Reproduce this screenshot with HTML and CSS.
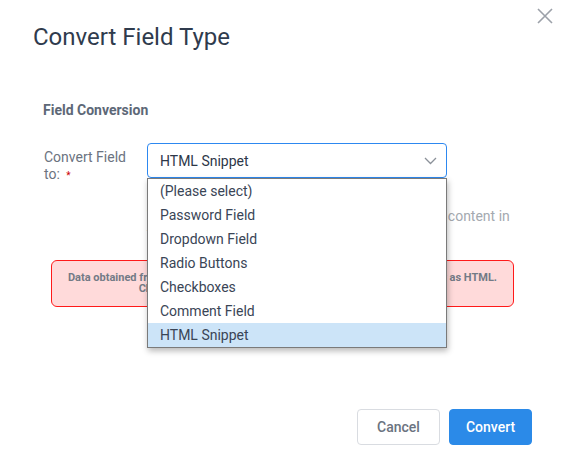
FILE: index.html
```html
<!DOCTYPE html>
<html>
<head>
<meta charset="utf-8">
<link rel="stylesheet" href="styles.css">
</head>
<body>
<div class="modal">
  <button class="close" aria-label="Close">
    <svg width="16" height="16" viewBox="0 0 16 16"><path d="M1 1L15 15M15 1L1 15" stroke="#9ca1a9" stroke-width="1.6" fill="none"/></svg>
  </button>
  <div class="header"><h1 class="title">Convert Field Type</h1></div>
  <div class="body">
    <div class="section-title">Field Conversion</div>
    <div class="form-row">
      <div class="label">Convert Field to: <span class="req">*</span></div>
      <div class="field">
        <div class="select">
          <span>HTML Snippet</span>
          <svg class="chev" width="13" height="8" viewBox="0 0 13 8"><polyline points="1,1 6.5,6.5 12,1" stroke="#8b9199" stroke-width="1.3" fill="none"/></svg>
        </div>
        <div class="help"><span class="help-line">This field lets you show your own custom HTML content in</span><span class="help-line">the form.</span></div>
        <ul class="dropdown">
          <li class="opt">(Please select)</li>
          <li class="opt">Password Field</li>
          <li class="opt">Dropdown Field</li>
          <li class="opt">Radio Buttons</li>
          <li class="opt">Checkboxes</li>
          <li class="opt">Comment Field</li>
          <li class="opt selected">HTML Snippet</li>
        </ul>
      </div>
    </div>
    <div class="alert">Data obtained from this field will be converted and henceforth displayed only as HTML.<br>Changing the field type cannot be undone once it is saved.</div>
  </div>
  <div class="footer">
    <button class="btn btn-cancel">Cancel</button>
    <button class="btn btn-primary">Convert</button>
  </div>
</div>
</body>
</html>
```

FILE: styles.css
```css
html, body {
  margin: 0;
  padding: 0;
  background: #ffffff;
}
body {
  font-family: Roboto, "Liberation Sans", sans-serif;
}
.modal {
  position: relative;
  width: 567px;
  height: 465px;
  box-sizing: border-box;
  display: flex;
  flex-direction: column;
  overflow: hidden;
}
.close {
  position: absolute;
  top: 8px;
  right: 14px;
  padding: 0;
  border: 0;
  background: none;
  width: 16px;
  height: 16px;
}
.close svg { display: block; }
.header {
  padding: 23px 34px 0 33px;
}
.title {
  margin: 0;
  font-size: 24px;
  line-height: 28px;
  font-weight: 400;
  color: #2f3b4d;
}
.body {
  padding: 0 53px 0 43px;
}
.section-title {
  margin-top: 51px;
  font-size: 14px;
  line-height: 17px;
  font-weight: 700;
  color: #5d6877;
}
.form-row {
  display: flex;
  margin-top: 24px;
  padding-left: 1px;
}
.label {
  width: 90px;
  margin-right: 13px;
  padding-top: 6px;
  font-size: 14px;
  line-height: 17px;
  color: #6b7380;
}
.req {
  color: #cc0000;
  font-size: 10px;
  margin-left: 3px;
}
.field {
  position: relative;
  width: 300px;
}
.select {
  height: 35px;
  box-sizing: border-box;
  border: 1px solid #2d88f0;
  border-radius: 4px;
  padding: 0 9px 0 12px;
  display: flex;
  align-items: center;
  justify-content: space-between;
  font-size: 14px;
  color: #2d3748;
}
.chev { display: block; margin-top: 1px; }
.help {
  margin-top: 30px;
  font-size: 14px;
  line-height: 17px;
  color: #a4a9b0;
}
.help-line { display: block; white-space: nowrap; }
.dropdown {
  position: absolute;
  top: 35px;
  left: 0;
  width: 300px;
  box-sizing: border-box;
  margin: 0;
  padding: 0;
  list-style: none;
  background: #ffffff;
  border: 1px solid #7a7a7a;
  box-shadow: 1px 3px 6px rgba(0, 0, 0, 0.28);
  z-index: 2;
}
.opt {
  height: 24px;
  line-height: 25px;
  padding-left: 12px;
  font-size: 14px;
  color: #3a4556;
}
.opt.selected {
  background: #cce4f8;
}
.alert {
  margin: 18px 0 0 8px;
  border: 1px solid #ff1a1a;
  border-radius: 6px;
  background: #ffdada;
  padding: 11px 10px 12px;
  text-align: center;
  font-size: 11px;
  line-height: 11px;
  font-weight: 700;
  color: #737a86;
}
.footer {
  margin-top: auto;
  display: flex;
  justify-content: flex-end;
  gap: 9px;
  padding: 0 35px 20px;
}
.btn {
  width: 83px;
  height: 36px;
  border-radius: 4px;
  font-family: Roboto, "Liberation Sans", sans-serif;
  font-size: 14px;
  font-weight: 500;
  cursor: pointer;
}
.btn-cancel {
  background: #ffffff;
  border: 1px solid #d9dce1;
  color: #6b7380;
}
.btn-primary {
  background: #2b8ae8;
  border: 1px solid #2b8ae8;
  color: #ffffff;
}
```
